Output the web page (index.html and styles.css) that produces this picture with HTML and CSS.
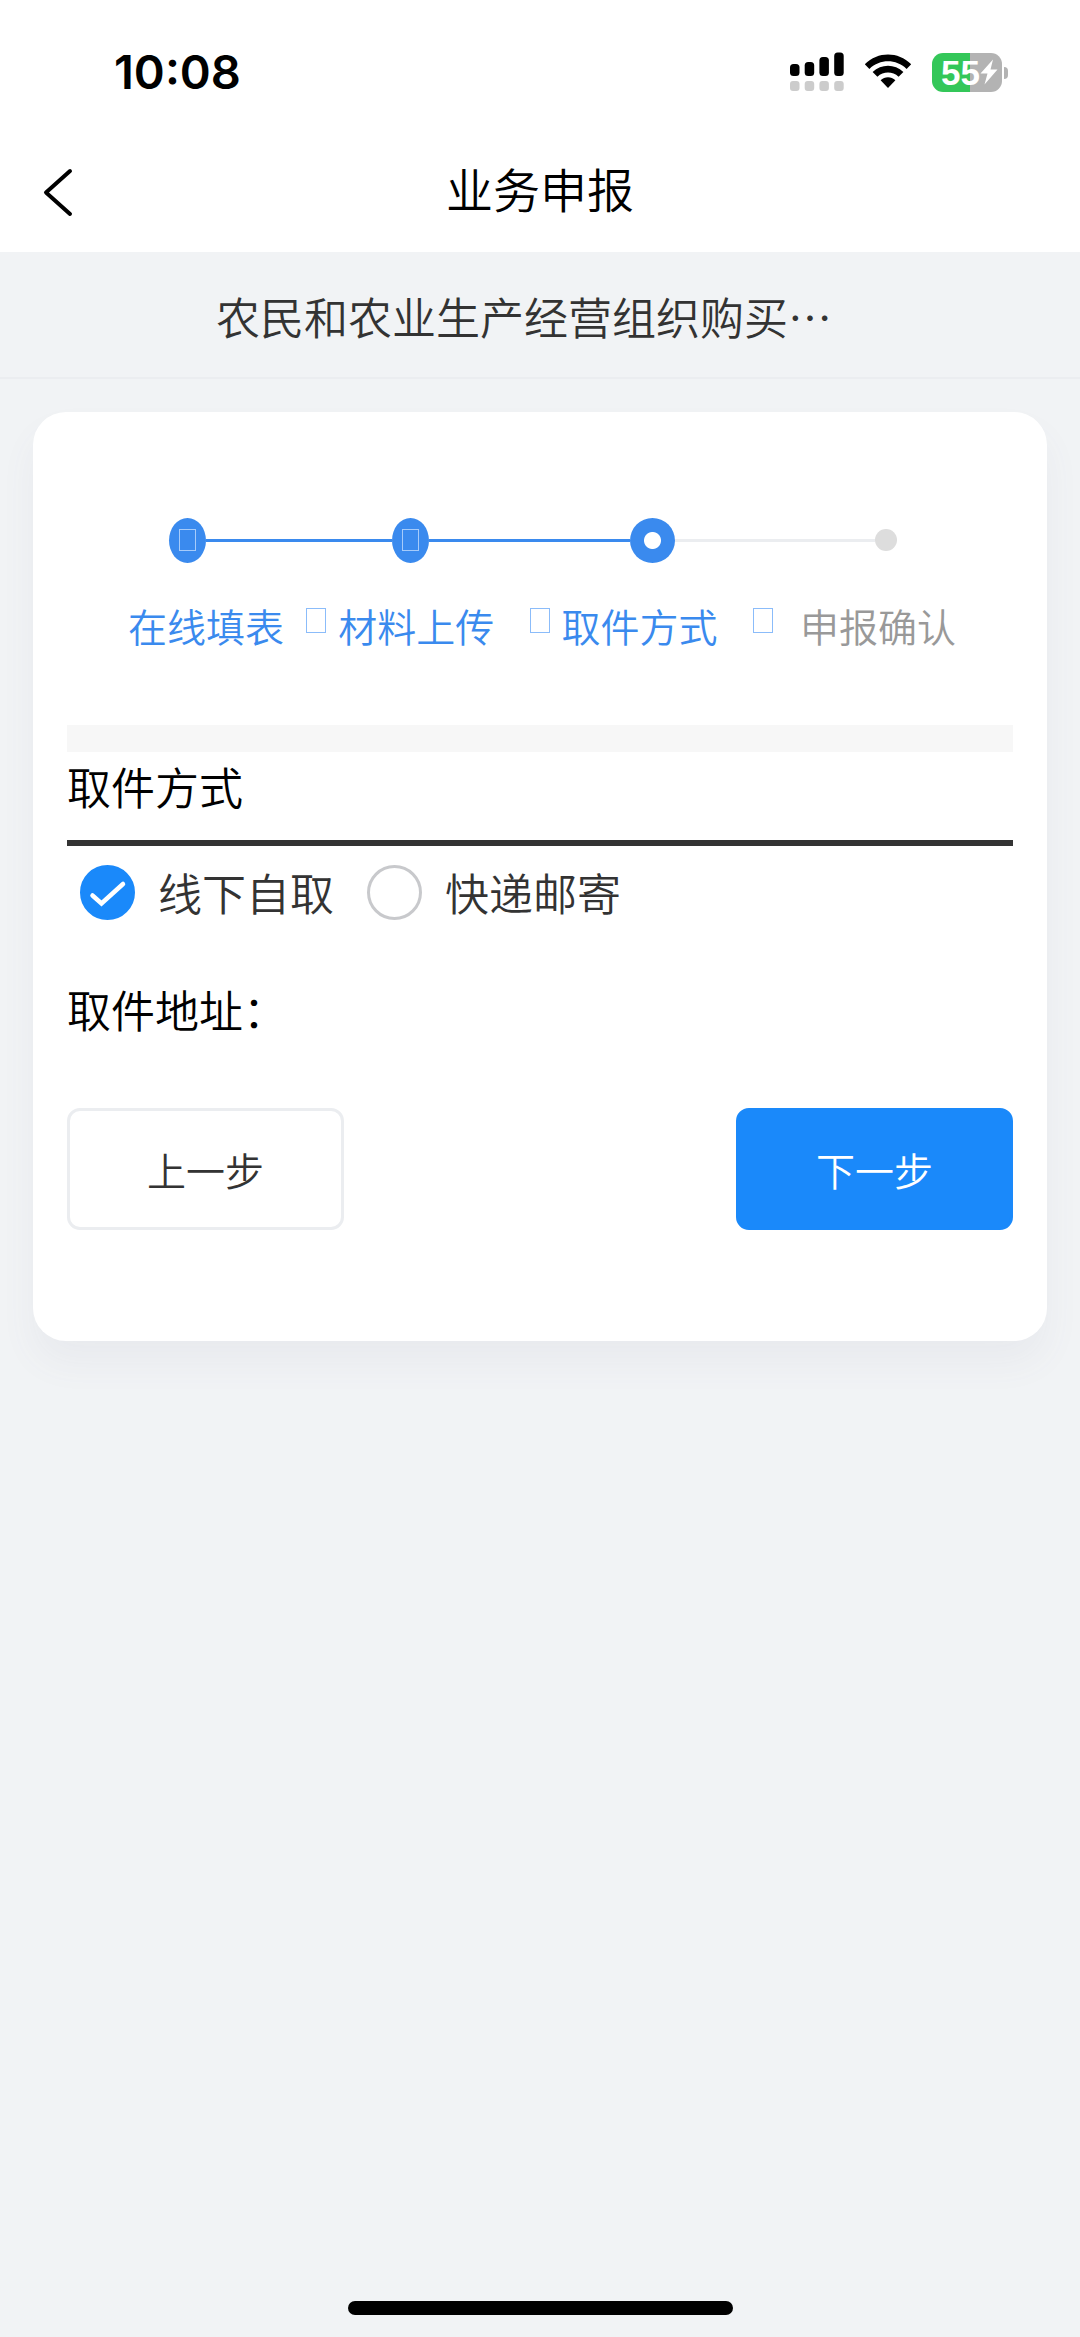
FILE: index.html
```html
<!DOCTYPE html>
<html lang="zh-CN">
<head>
<meta charset="utf-8">
<meta name="viewport" content="width=device-width, initial-scale=1">
<title>业务申报</title>
<link rel="stylesheet" href="styles.css">
</head>
<body>
<div class="page">
  <div class="status">
    <span class="status-time">10:08</span>
    <div class="status-icons">
      <svg class="signal" width="54" height="40" viewBox="0 0 54 40" aria-hidden="true">
        <g fill="#000"><rect x="0" y="12" width="9.5" height="12" rx="3.5"/><rect x="14.7" y="10" width="9.5" height="14" rx="3.5"/><rect x="29.4" y="5" width="9.5" height="19" rx="3.5"/><rect x="44.2" y="0.5" width="9.5" height="23.5" rx="3.5"/></g>
        <g fill="#ccc"><rect x="0" y="29" width="9.5" height="10" rx="3"/><rect x="14.7" y="29" width="9.5" height="10" rx="3"/><rect x="29.4" y="29" width="9.5" height="10" rx="3"/><rect x="44.2" y="29" width="9.5" height="10" rx="3"/></g>
      </svg>
      <svg class="wifi" width="48" height="40" viewBox="0 0 48 40" aria-hidden="true">
        <path d="M0.8 12.2C14 -0.7 34 -0.7 47.2 12.2L42.6 17C32 6.800 16 6.800 5.400 17Z"/>
        <path d="M8.600 20C17.400 11.600 30.600 11.600 39.400 20L34.600 24.800C28.500 19.200 19.500 19.200 13.400 24.800Z"/>
        <path d="M16.600 28.200C20.800 24.200 27.200 24.200 31.400 28.200L24 36Z"/>
      </svg>
      <div class="battery">
        <span>55</span>
        <svg width="18" height="26" viewBox="0 0 18 26" aria-hidden="true"><path fill="#fff" d="M13 0.500L0.500 14.500H7.500L4.500 25.500L17.500 10.500H10.500Z"/></svg>
      </div>
    </div>
  </div>
  <header class="nav">
    <button class="back" type="button" aria-label="返回">
      <svg width="30" height="50" viewBox="0 0 30 50" aria-hidden="true"><path d="M27 4L3 25.500L27 47" fill="none" stroke="#000" stroke-width="4" stroke-linecap="round" stroke-linejoin="round"/></svg>
    </button>
    <h1>业务申报</h1>
  </header>
  <div class="subject"><p>农民和农业生产经营组织购买…</p></div>
  <main class="card">
    <div class="track" aria-hidden="true">
      <span class="dot done"><i class="mark"></i></span>
      <span class="line"></span>
      <span class="dot done"><i class="mark"></i></span>
      <span class="line later"></span>
      <span class="dot current"></span>
      <span class="line later todo"></span>
      <span class="dot pending"></span>
    </div>
    <ol class="steps">
      <li>在线填表<i class="mark"></i></li>
      <li>材料上传<i class="mark"></i></li>
      <li aria-current="step">取件方式<i class="mark"></i></li>
      <li>申报确认</li>
    </ol>
    <div class="band"></div>
    <form>
      <h2 id="pickup">取件方式</h2>
      <div class="options" role="radiogroup" aria-labelledby="pickup">
        <label class="option">
          <span class="radio"><input type="radio" name="pickup" value="self" checked>
          <svg width="55" height="55" viewBox="0 0 55 55" aria-hidden="true"><path d="M12.500 30.500L21.500 38.500L43 19" fill="none" stroke="#fff" stroke-width="4.500" stroke-linecap="round" stroke-linejoin="miter"/></svg></span>
          线下自取
        </label>
        <label class="option">
          <span class="radio"><input type="radio" name="pickup" value="mail">
          <svg width="55" height="55" viewBox="0 0 55 55" aria-hidden="true"><path d="M12.500 30.500L21.500 38.500L43 19" fill="none" stroke="#fff" stroke-width="4.500" stroke-linecap="round" stroke-linejoin="miter"/></svg></span>
          快递邮寄
        </label>
      </div>
      <p class="address">取件地址：</p>
      <div class="actions">
        <button class="btn" type="button">上一步</button>
        <button class="btn primary" type="submit">下一步</button>
      </div>
    </form>
  </main>
  <div class="home"></div>
</div>
</body>
</html>
```

FILE: styles.css
```css
* { box-sizing: border-box; margin: 0; padding: 0; }

body {
  background: #f1f3f5;
  color: #000;
  font-family: "Noto Sans CJK SC", sans-serif;
  font-size: 44px;
  font-weight: 350;
  line-height: 68px;
}

button { font: inherit; color: inherit; background: none; border: 0; }
svg { display: block; }

.page { min-height: 100vh; display: flex; flex-direction: column; }

/* Status bar */
.status {
  height: 124px;
  padding: 20px 72px 0 114px;
  display: flex;
  align-items: center;
  justify-content: space-between;
  background: #fff;
}
.status-time { font-family: Inter, sans-serif; font-weight: 600; font-size: 47px; }
.status-icons { display: flex; align-items: center; gap: 20px; }
.battery {
  position: relative;
  width: 70px;
  height: 39px;
  margin-right: 6px;
  padding-left: 9px;
  display: flex;
  align-items: center;
  border-radius: 11px;
  background: linear-gradient(90deg, #34c759 55%, #b3b3b3 55%);
  color: #fff;
  font: bold 35px/39px "Liberation Sans", sans-serif;
}
.battery::after {
  content: "";
  position: absolute;
  right: -6px;
  top: 14px;
  width: 4px;
  height: 12px;
  border-radius: 0 4px 4px 0;
  background: #b3b3b3;
}

/* Navigation */
.nav {
  height: 128px;
  padding: 0 43px;
  display: grid;
  grid-template-columns: 30px 1fr 30px;
  align-items: center;
  background: #fff;
}
.back { padding-top: 8px; }
.nav h1 { font-size: 47px; font-weight: inherit; text-align: center; }

.subject { padding: 30px 20% 27px; border-bottom: 2px solid #ebedf0; color: #333; }
.subject p { white-space: nowrap; }

/* Card */
.card {
  margin: 33px 33px 0;
  padding: 105px 34px 111px;
  background: #fff;
  border-radius: 33px;
  box-shadow: 0 22px 36px rgba(100, 101, 130, 0.06);
}

/* Step progress */
.track { height: 46px; padding: 0 116px 0 102px; display: flex; align-items: center; }
.dot { flex: none; border-radius: 50%; background: #3a8aee; }
.done { width: 37px; height: 45px; display: grid; place-items: center; }
.done .mark { width: 17px; height: 22px; border-color: #a6cbfa; }
.current { width: 45px; height: 45px; background: radial-gradient(#fff 8px, #3a8aee 9px); }
.pending { width: 22px; height: 22px; background: #ddd; }
.line { flex: 13 1 0; height: 3px; background: #3a8aee; }
.later { flex-grow: 14; }
.todo { background: #ebedf0; }
.mark { width: 20px; height: 25px; border: 1px solid #8bbcfa; }

.steps {
  margin-top: 34px;
  padding: 0 57px 0 61px;
  display: flex;
  gap: 12px;
  list-style: none;
  color: #3a8aee;
  font-size: 39px;
  line-height: 56px;
}
.steps li {
  flex: 16 1 0;
  display: flex;
  align-items: center;
  justify-content: space-between;
  white-space: nowrap;
}
.steps li:first-child { flex-grow: 15; }
.steps li:last-child { flex: none; margin-left: 15px; color: #999; }
.steps .mark { margin-bottom: 9px; }

.band { height: 27px; margin-top: 72px; background: #f7f7f7; }

/* Form */
h2 { padding-bottom: 20px; border-bottom: 6px solid #333; font-size: 44px; font-weight: inherit; }
.options { height: 92px; padding-left: 13px; display: flex; gap: 33px; color: #333; }
.option { display: flex; align-items: center; gap: 23px; }
.radio { display: grid; }
.radio input, .radio svg { grid-area: 1 / 1; }
.radio input {
  appearance: none;
  width: 55px;
  height: 55px;
  border: 3px solid #c8c9cc;
  border-radius: 50%;
}
.radio input:checked { background: #1a89fa; border-color: #1a89fa; }
.radio svg { z-index: 1; pointer-events: none; }
.address { margin-top: 37px; }
.actions { margin-top: 65px; display: flex; justify-content: space-between; }
.btn {
  width: 277px;
  height: 122px;
  border: 3px solid #ebedf0;
  border-radius: 13px;
  color: #333;
  font-size: 39px;
}
.primary { background: #1a89fa; border-color: #1a89fa; color: #fff; }

.home {
  width: 385px;
  height: 14px;
  margin: auto auto 22px;
  border-radius: 7px;
  background: #000;
}
```
